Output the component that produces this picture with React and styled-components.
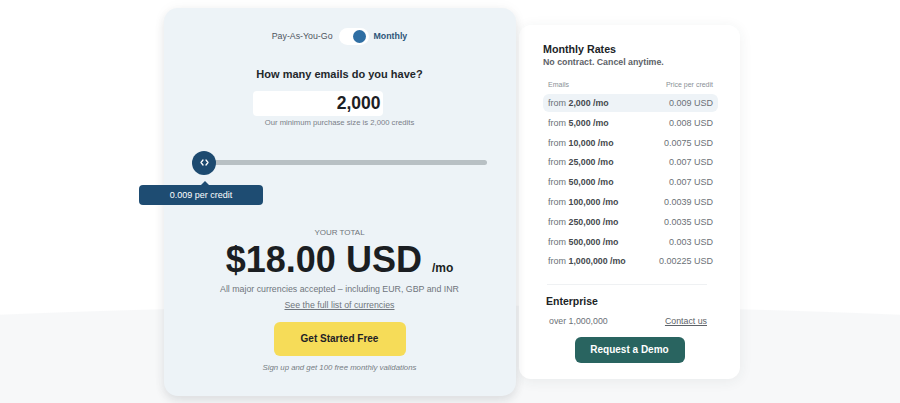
import React from "react";
import styled, { createGlobalStyle } from "styled-components";

const GlobalStyle = createGlobalStyle`
  html, body {
    margin: 0;
    padding: 0;
  }
  body {
    font-family: "Liberation Sans", Arial, sans-serif;
    background: radial-gradient(ellipse 1500px 200px at 50% 505px, #f7f8f9 99.5%, #ffffff 100%);
    background-color: #ffffff;
    width: 900px;
    height: 403px;
    overflow: hidden;
  }
`;

const Page = styled.div`
  height: 403px;
  display: flex;
  justify-content: center;
  align-items: center;
  padding-left: 4px;
  box-sizing: border-box;
`;

const CalcCard = styled.div`
  width: 352px;
  height: 388px;
  box-sizing: border-box;
  background: #edf3f7;
  border-radius: 14px;
  box-shadow: 0 5px 10px rgba(40, 50, 60, 0.1), 0 0 14px rgba(40, 50, 60, 0.04);
  padding: 20px 29px 0 28px;
  display: flex;
  flex-direction: column;
  align-items: center;
  position: relative;
  z-index: 1;
`;

const ToggleRow = styled.div`
  display: flex;
  align-items: center;
  height: 17px;
  font-size: 8.8px;
`;

const ToggleLabel = styled.span`
  color: ${(p) => (p.$active ? "#2d5679" : "#4d5560")};
  font-weight: ${(p) => (p.$active ? 700 : 400)};
  margin: ${(p) => (p.$active ? "0 0 0 5px" : "0 6px 0 0")};
`;

const Switch = styled.div`
  width: 30px;
  height: 17px;
  border-radius: 9px;
  background: #ffffff;
  display: flex;
  align-items: center;
  justify-content: flex-end;
  padding: 0 3px;
  box-sizing: border-box;
`;

const Knob = styled.span`
  width: 13px;
  height: 13px;
  border-radius: 50%;
  background: #2f6ea3;
`;

const Heading = styled.h2`
  margin: 22px 0 0;
  font-size: 11px;
  line-height: 15px;
  font-weight: 700;
  color: #23272b;
`;

const AmountBox = styled.div`
  margin: 9px 44px 0 0;
  width: 130px;
  height: 25px;
  box-sizing: border-box;
  background: #ffffff;
  border-radius: 4px;
  display: flex;
  align-items: center;
  justify-content: flex-end;
  padding-right: 2px;
  font-size: 17.5px;
  font-weight: 700;
  color: #1d2024;
`;

const Hint = styled.p`
  margin: ${(p) => p.$m || "0"};
  font-size: ${(p) => p.$size || "7.7px"};
  line-height: ${(p) => p.$lh || "10px"};
  color: ${(p) => p.$color || "#7a8088"};
  font-style: ${(p) => (p.$italic ? "italic" : "normal")};
  text-decoration: ${(p) => (p.$underline ? "underline" : "none")};
`;

const SliderRow = styled.div`
  margin-top: 23px;
  width: 100%;
  height: 24px;
  position: relative;
  display: flex;
  align-items: center;
  padding-left: 12px;
  box-sizing: border-box;
`;

const Track = styled.div`
  flex: 1;
  height: 5px;
  border-radius: 3px;
  background: #b8c0c4;
`;

const Thumb = styled.div`
  position: absolute;
  left: 0;
  top: 0;
  width: 24px;
  height: 24px;
  border-radius: 50%;
  background: #1d4a70;
  color: #ffffff;
  display: flex;
  align-items: center;
  justify-content: center;
  z-index: 2;
`;

const Tooltip = styled.div`
  position: absolute;
  left: -53px;
  top: 34px;
  width: 124px;
  height: 20px;
  border-radius: 4px;
  background: #1e4c72;
  color: #ffffff;
  font-size: 9px;
  display: flex;
  align-items: center;
  justify-content: center;
  &::before {
    content: "";
    position: absolute;
    left: 62px;
    top: -4px;
    border-left: 4px solid transparent;
    border-right: 4px solid transparent;
    border-bottom: 4px solid #1e4c72;
  }
`;

const TotalLabel = styled.div`
  margin-top: 53px;
  font-size: 8px;
  line-height: 10px;
  color: #6d737a;
  text-transform: uppercase;
`;

const PriceRow = styled.div`
  margin-top: 2px;
  display: flex;
  align-items: baseline;
`;

const Price = styled.span`
  font-size: 36px;
  line-height: 40px;
  font-weight: 700;
  color: #1b1e22;
`;

const Per = styled.span`
  font-size: 12px;
  font-weight: 700;
  color: #1b1e22;
  margin-left: 10px;
`;

const StartButton = styled.button`
  margin-top: 11px;
  width: 132px;
  height: 34px;
  border: none;
  border-radius: 6px;
  background: #f6dc58;
  font-family: inherit;
  font-size: 10px;
  font-weight: 700;
  color: #1f2226;
`;

const RatesCard = styled.div`
  width: 221px;
  height: 354px;
  margin-left: 3px;
  box-sizing: border-box;
  background: #ffffff;
  border-radius: 12px;
  box-shadow: 0 2px 14px rgba(40, 50, 60, 0.07);
  padding: 17px 22px 0 24px;
  display: flex;
  flex-direction: column;
`;

const RatesTitle = styled.h3`
  margin: 0;
  font-size: 10.7px;
  line-height: 14px;
  font-weight: 700;
  color: #202326;
`;

const RatesSub = styled.div`
  font-size: 8.8px;
  line-height: 12px;
  font-weight: 700;
  color: #5d6268;
`;

const TableHead = styled.div`
  margin: 12px 0 5.5px;
  padding: 0 5px;
  display: flex;
  justify-content: space-between;
  font-size: 7px;
  line-height: 9px;
  color: #8a9096;
`;

const RateRow = styled.div`
  height: 18px;
  margin-bottom: 1.8px;
  padding: 0 5px;
  border-radius: 6px;
  background: ${(p) => (p.$active ? "#eef3f7" : "transparent")};
  display: flex;
  justify-content: space-between;
  align-items: center;
  font-size: 9px;
  color: #6b7177;
`;

const Strong = styled.b`
  color: #45494e;
  font-weight: 700;
  font-size: 8.8px;
`;

const Divider = styled.div`
  margin: 11.5px 11px 0 4px;
  height: 1px;
  background: #eff1f3;
`;

const EnterpriseTitle = styled.div`
  margin: 9px 0 0 3px;
  font-size: 10.5px;
  line-height: 14px;
  font-weight: 700;
  color: #202326;
`;

const EnterpriseRow = styled.div`
  margin: 7px 11px 0 6px;
  display: flex;
  justify-content: space-between;
  font-size: 8.8px;
  line-height: 12px;
  color: #6b7177;
`;

const Contact = styled.span`
  text-decoration: underline;
  color: #5d6268;
`;

const DemoButton = styled.button`
  margin: 10px auto 0;
  width: 110px;
  height: 26px;
  border: none;
  border-radius: 6px;
  background: #296460;
  color: #ffffff;
  font-family: inherit;
  font-size: 10px;
  font-weight: 700;
  position: relative;
  left: -1px;
`;

const rates = [
  ["2,000", "0.009"],
  ["5,000", "0.008"],
  ["10,000", "0.0075"],
  ["25,000", "0.007"],
  ["50,000", "0.007"],
  ["100,000", "0.0039"],
  ["250,000", "0.0035"],
  ["500,000", "0.003"],
  ["1,000,000", "0.00225"],
];

export default function App() {
  return (
    <>
      <GlobalStyle />
      <Page>
        <CalcCard>
          <ToggleRow>
            <ToggleLabel>Pay-As-You-Go</ToggleLabel>
            <Switch>
              <Knob />
            </Switch>
            <ToggleLabel $active>Monthly</ToggleLabel>
          </ToggleRow>
          <Heading>How many emails do you have?</Heading>
          <AmountBox>2,000</AmountBox>
          <Hint $m="2px 0 0">Our minimum purchase size is 2,000 credits</Hint>
          <SliderRow>
            <Thumb>
              <svg width="9" height="7" viewBox="0 0 9 7" fill="none" stroke="#fff" strokeWidth="1.3" strokeLinecap="round" strokeLinejoin="round">
                <path d="M3 1 L1 3.5 L3 6" />
                <path d="M6 1 L8 3.5 L6 6" />
              </svg>
            </Thumb>
            <Tooltip>0.009 per credit</Tooltip>
            <Track />
          </SliderRow>
          <TotalLabel>Your Total</TotalLabel>
          <PriceRow>
            <Price>$18.00 USD</Price>
            <Per>/mo</Per>
          </PriceRow>
          <Hint $m="3px 0 0" $size="8.8px" $lh="12px" $color="#6f757c">
            All major currencies accepted – including EUR, GBP and INR
          </Hint>
          <Hint $m="4px 0 0" $size="8.8px" $lh="12px" $color="#6f757c" $underline>
            See the full list of currencies
          </Hint>
          <StartButton>Get Started Free</StartButton>
          <Hint $m="7px 0 0" $italic $size="7.8px" $color="#777d84">
            Sign up and get 100 free monthly validations
          </Hint>
        </CalcCard>
        <RatesCard>
          <RatesTitle>Monthly Rates</RatesTitle>
          <RatesSub>No contract. Cancel anytime.</RatesSub>
          <TableHead>
            <span>Emails</span>
            <span>Price per credit</span>
          </TableHead>
          {rates.map(([amount, price], i) => (
            <RateRow key={amount} $active={i === 0}>
              <span>
                from <Strong>{amount} /mo</Strong>
              </span>
              <span>{price} USD</span>
            </RateRow>
          ))}
          <Divider />
          <EnterpriseTitle>Enterprise</EnterpriseTitle>
          <EnterpriseRow>
            <span>over 1,000,000</span>
            <Contact>Contact us</Contact>
          </EnterpriseRow>
          <DemoButton>Request a Demo</DemoButton>
        </RatesCard>
      </Page>
    </>
  );
}
